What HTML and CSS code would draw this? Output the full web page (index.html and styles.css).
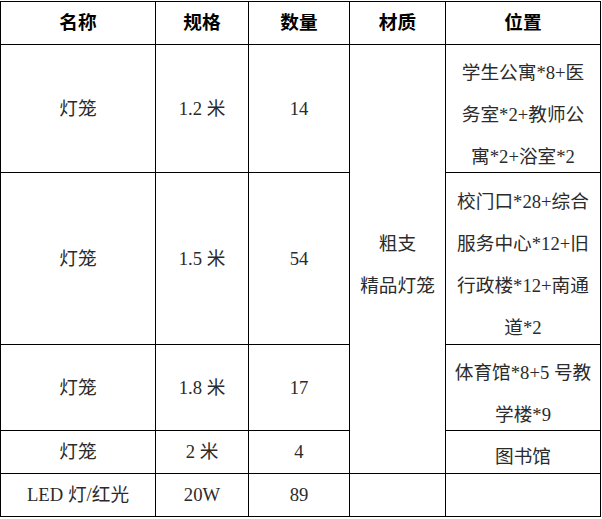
FILE: index.html
```html
<!DOCTYPE html>
<html lang="zh">
<head>
<meta charset="utf-8">
<link rel="stylesheet" href="styles.css">
</head>
<body>
<table class="grid">
  <colgroup>
    <col class="c-name">
    <col class="c-spec">
    <col class="c-qty">
    <col class="c-mat">
    <col class="c-pos">
  </colgroup>
  <thead>
    <tr class="r-head">
      <th>名称</th><th>规格</th><th>数量</th><th>材质</th><th>位置</th>
    </tr>
  </thead>
  <tbody>
    <tr class="r1">
      <td>灯笼</td><td>1.2 米</td><td>14</td>
      <td rowspan="4" class="mat"><div class="shift">粗支<br>精品灯笼</div></td>
      <td class="pos"><div class="shift">学生公寓*8+医<br>务室*2+教师公<br>寓*2+浴室*2</div></td>
    </tr>
    <tr class="r2">
      <td>灯笼</td><td>1.5 米</td><td>54</td>
      <td class="pos"><div class="shift">校门口*28+综合<br>服务中心*12+旧<br>行政楼*12+南通<br>道*2</div></td>
    </tr>
    <tr class="r3">
      <td>灯笼</td><td>1.8 米</td><td>17</td>
      <td class="pos"><div class="shift">体育馆*8+5 号教<br>学楼*9</div></td>
    </tr>
    <tr class="r4">
      <td>灯笼</td><td>2 米</td><td>4</td>
      <td class="pos"><div class="shift">图书馆</div></td>
    </tr>
    <tr class="r5">
      <td>LED 灯/红光</td><td>20W</td><td>89</td>
      <td></td><td></td>
    </tr>
  </tbody>
</table>
</body>
</html>
```
FILE: styles.css
```css
html, body {
  margin: 0;
  padding: 0;
  background: #fff;
}
body {
  padding-top: 1px;
  font-family: "Liberation Serif", "Noto Sans CJK SC", serif;
  font-size: 18.67px;
  color: #2b2b2b;
}
.grid {
  border-collapse: collapse;
  table-layout: fixed;
  width: 600px;
}
.c-name { width: 155px; }
.c-spec { width: 93px; }
.c-qty { width: 101px; }
.c-mat { width: 96px; }
.c-pos { width: 155px; }
.grid th,
.grid td {
  border: 1px solid #000;
  padding: 0;
  text-align: center;
  vertical-align: middle;
  line-height: 42px;
}
.grid th {
  font-weight: bold;
  color: #000;
}
.r-head { height: 43px; }
.r1 { height: 128px; }
.r2 { height: 172px; }
.r3 { height: 86px; }
.r4 { height: 43px; }
.r5 { height: 43px; }
.r4 .pos { line-height: 32px; }
.shift {
  margin: 6px 0 -6px;
}
.r4 .shift {
  margin: 5px 0 -5px;
}
```
